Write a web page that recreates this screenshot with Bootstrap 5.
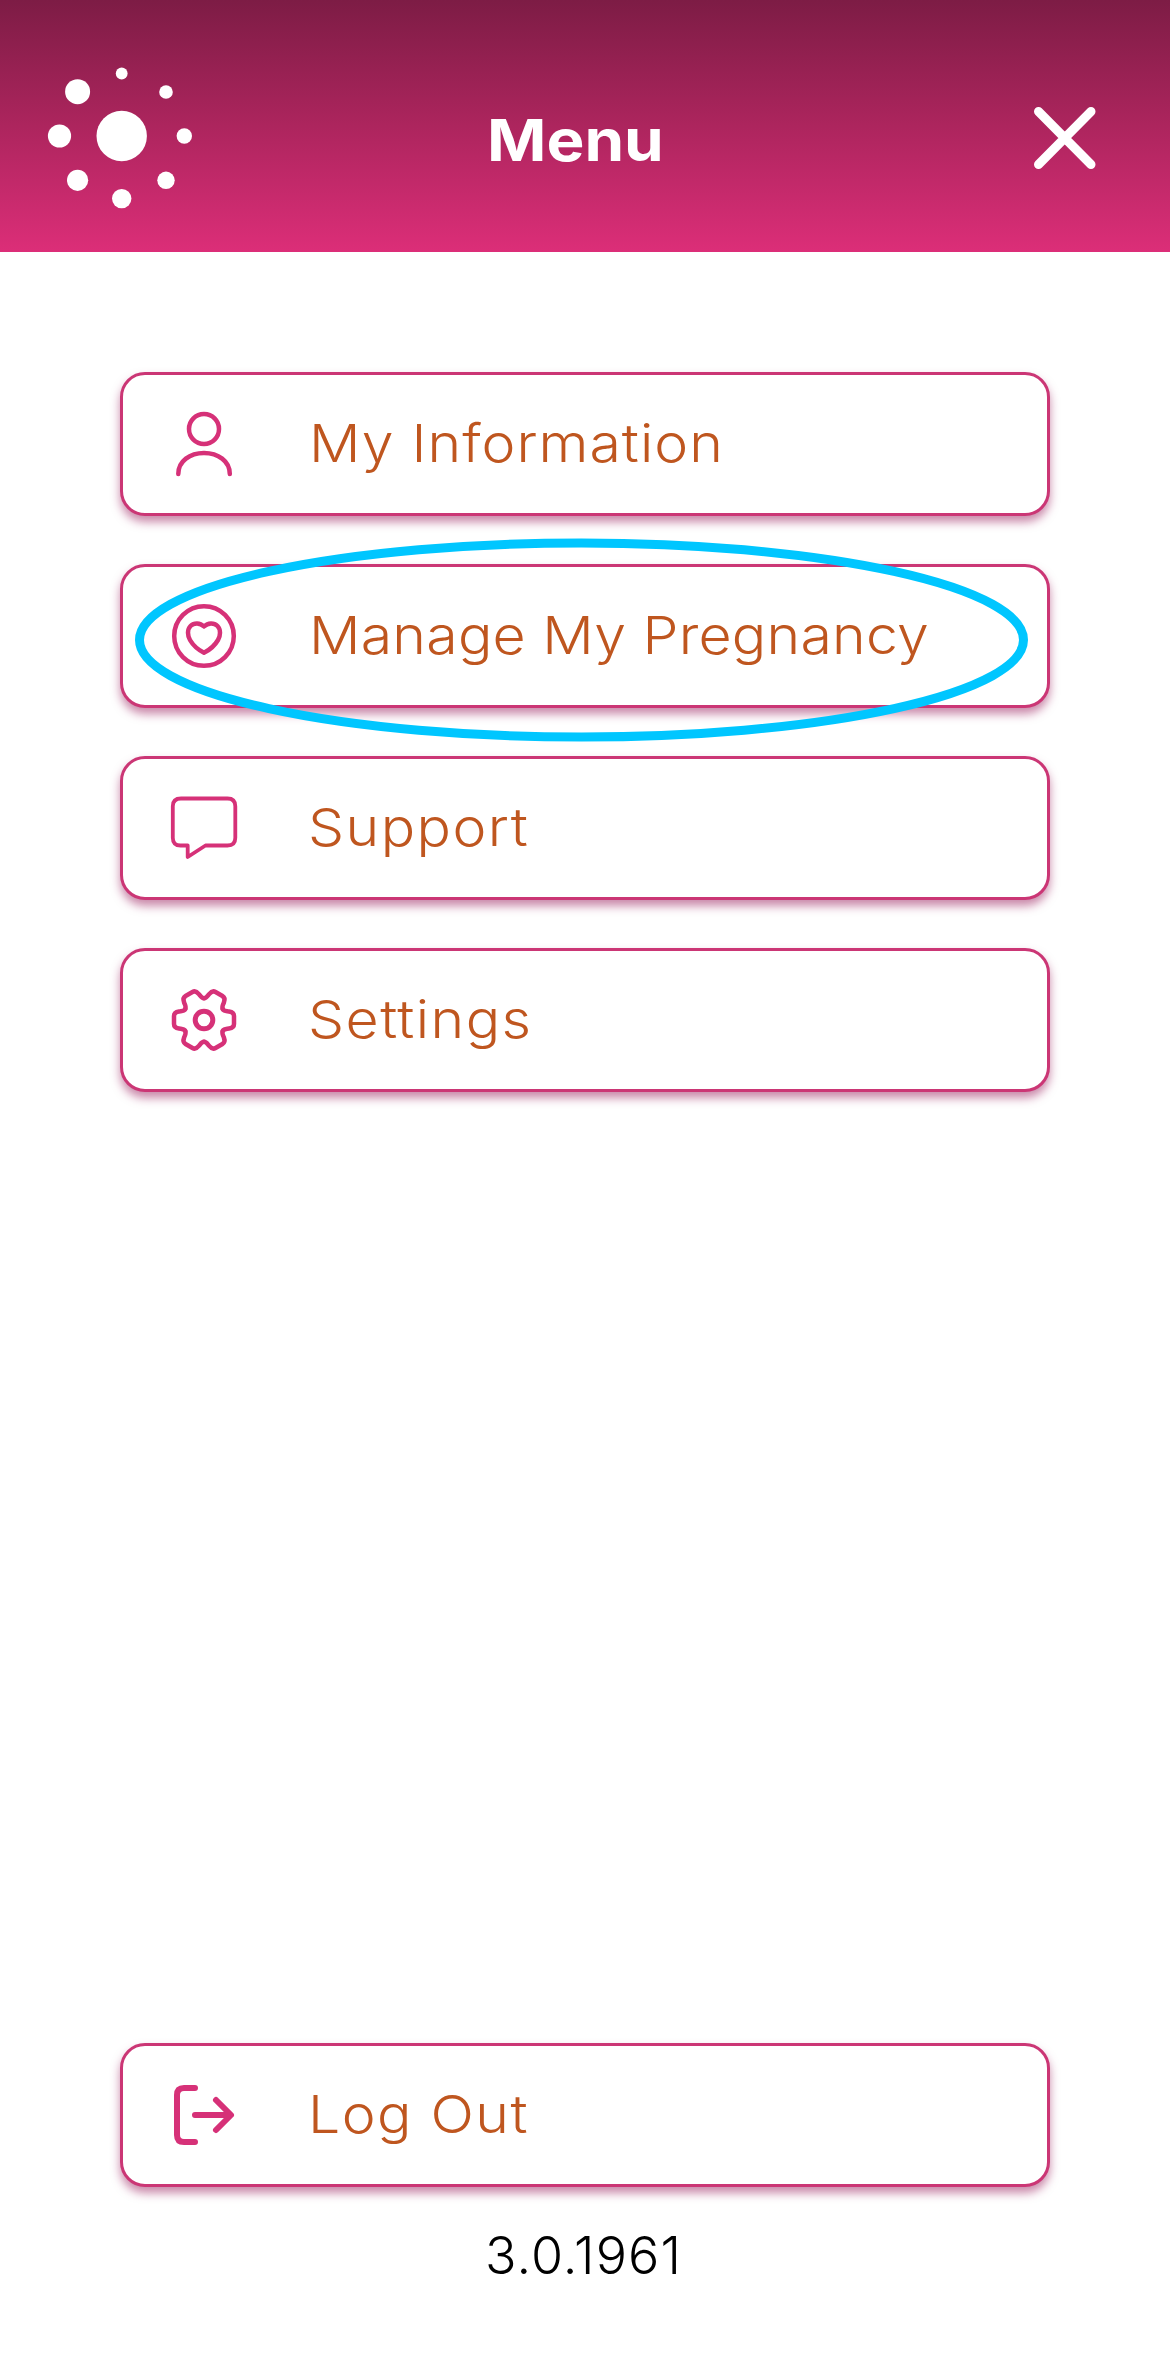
<!DOCTYPE html>
<html lang="en">
<head>
<meta charset="utf-8">
<meta name="viewport" content="width=device-width, initial-scale=1">
<title>Menu</title>
<link href="https://cdn.jsdelivr.net/npm/bootstrap@5.3.0/dist/css/bootstrap.min.css" rel="stylesheet">
<script src="https://cdn.jsdelivr.net/npm/bootstrap@5.3.0/dist/js/bootstrap.bundle.min.js"></script>
<style>
body { font-family: Inter, "Open Sans", sans-serif; color: #000; background: #fff; }
.screen { height: 2353px; }
.app-bar { height: 252px; padding: 20px 69px 0 41px; background: linear-gradient(#7d1c45, #a8245b 45%, #dc2e78); color: #fff; }
.app-title { font-size: 58px; font-weight: 700; line-height: 70px; padding: 7px 76px 0 0; }
.app-title span { display: inline-block; transform: scaleX(1.1); }
.menu-list { padding: 120px 120px 0; gap: 48px; }
.menu-item { height: 144px; padding: 0 45px; border: 3px solid #cb3675; border-radius: 25px; background: #fff; color: #bf561f; font-size: 52px; font-weight: 300; line-height: 72px; box-shadow: 0 6px 10px rgba(150, 20, 85, .5); text-decoration: none; }
.menu-item svg { width: 72px; height: 72px; fill: none; stroke: #d63178; stroke-width: 4.5; stroke-linecap: round; stroke-linejoin: round; overflow: visible; }
.item-text { margin-left: 69px; white-space: nowrap; letter-spacing: .9px; transform: scaleX(1.1); transform-origin: left center; }
.item-long { letter-spacing: .2px; }
.item-short { letter-spacing: 1.3px; margin-left: 68px; }
.highlight { left: 135px; top: 538px; width: 893px; height: 204px; pointer-events: none; }
.screen-foot { padding: 0 120px 61px; }
.version { font-size: 52px; font-weight: 300; line-height: 72px; margin-top: 33px; padding-right: 3px; letter-spacing: 1.1px; }
</style>
</head>
<body>
<div class="screen position-relative d-flex flex-column overflow-hidden">
  <header class="app-bar d-flex align-items-center">
    <svg class="flex-shrink-0" width="156" height="150" viewBox="41 61 156 150" fill="#fff" aria-hidden="true">
      <circle cx="121.7" cy="136" r="25.2"/><circle cx="121.7" cy="73.5" r="5.9"/><circle cx="166" cy="92" r="6.8"/><circle cx="184.3" cy="136" r="7.7"/><circle cx="166" cy="180.3" r="8.7"/><circle cx="121.7" cy="198.6" r="9.7"/><circle cx="77.6" cy="180.3" r="10.6"/><circle cx="59.5" cy="136" r="11.6"/><circle cx="77.6" cy="91.7" r="12.5"/>
    </svg>
    <h1 class="app-title flex-grow-1 text-center mb-0"><span>Menu</span></h1>
    <svg class="flex-shrink-0" width="72" height="72" viewBox="1029 100 72 72" stroke="#fff" stroke-width="9" stroke-linecap="round" role="img" aria-label="Close"><path d="M1038.5 111.500 1091 164.500M1091 111.500 1038.500 164.500"/></svg>
  </header>

  <nav class="menu-list d-flex flex-column">
    <a class="menu-item d-flex align-items-center" href="#">
      <svg viewBox="0 0 72 72"><circle cx="36" cy="21" r="15"/><path d="M10.300 66C10.300 53 22 45 36 45S61.800 53 61.800 66"/></svg>
      <span class="item-text">My Information</span>
    </a>
    <a class="menu-item d-flex align-items-center" href="#">
      <svg viewBox="0 0 72 72"><circle cx="36" cy="36" r="29.800"/><path d="M36 26.500C32 22.500 26 22.500 22.500 26 19 29.500 19.500 35.500 22 40 25.200 45.500 31.500 50.500 36 52.700 40.500 50.500 46.800 45.500 50 40 52.500 35.500 53 29.500 49.500 26 46 22.500 40 22.500 36 26.500Z"/></svg>
      <span class="item-text item-long">Manage My Pregnancy</span>
    </a>
    <a class="menu-item d-flex align-items-center" href="#">
      <svg viewBox="0 0 72 72"><path stroke-width="3.800" d="M13 6.500H59.500Q67.300 6.500 67.300 14.300V45.700Q67.300 53.500 59.500 53.500H37.500L19.700 65V53.500H12.500Q4.800 53.500 4.800 45.700V14.300Q4.800 6.500 13 6.500Z"/></svg>
      <span class="item-text item-short">Support</span>
    </a>
    <a class="menu-item d-flex align-items-center" href="#">
      <svg viewBox="-36 -36 72 72">
        <defs><path id="tooth" d="M18.800-10.900C20.100-8.700 22-9 25-8.500Q30-7.700 30-4L30 4Q30 7.700 25 8.500C22 9 20.100 8.700 18.800 10.900"/></defs>
        <use href="#tooth"/><use href="#tooth" transform="rotate(60)"/><use href="#tooth" transform="rotate(120)"/><use href="#tooth" transform="rotate(180)"/><use href="#tooth" transform="rotate(240)"/><use href="#tooth" transform="rotate(300)"/>
        <circle r="8.800" stroke-width="5"/>
      </svg>
      <span class="item-text item-short">Settings</span>
    </a>
  </nav>

  <footer class="screen-foot mt-auto">
    <a class="menu-item d-flex align-items-center" href="#">
      <svg viewBox="0 0 72 72"><path stroke-width="6" d="M27 9H16Q9 9 9 16V56Q9 63 16 63H27M27 36H62M48 21 63 36 48 51"/></svg>
      <span class="item-text item-short">Log Out</span>
    </a>
    <div class="version text-center">3.0.1961</div>
  </footer>

  <svg class="highlight position-absolute" viewBox="0 0 893 204" fill="none" stroke="#00c6ff" stroke-width="9" aria-hidden="true"><ellipse cx="446.500" cy="102" rx="442" ry="97"/></svg>
</div>
</body>
</html>
